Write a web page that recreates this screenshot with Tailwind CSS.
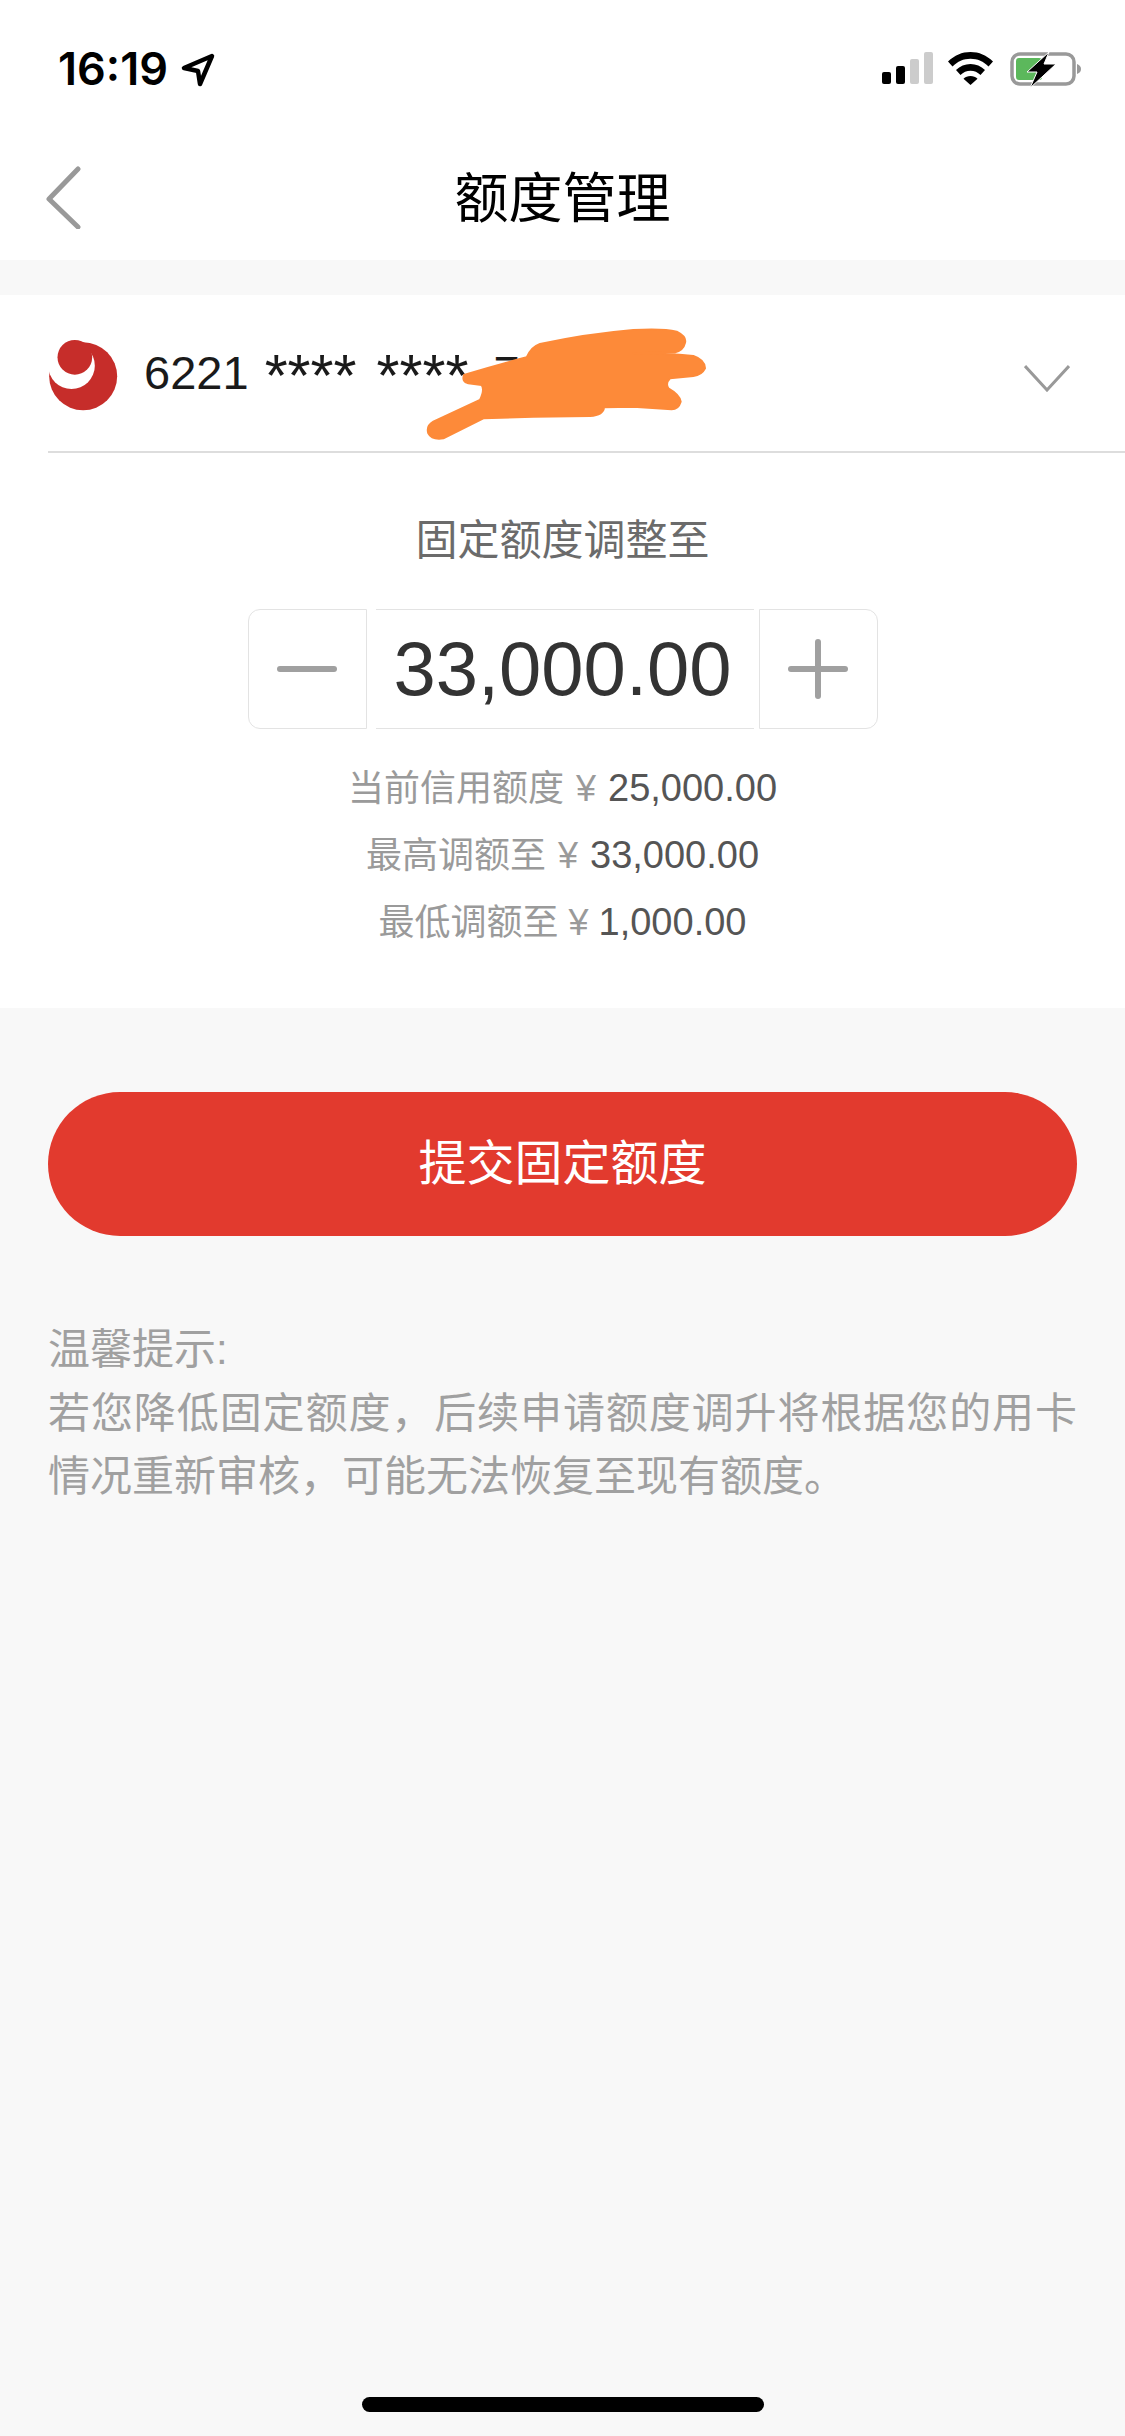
<!DOCTYPE html>
<html lang="zh">
<head>
    <meta charset="UTF-8">
    <meta name="viewport" content="width=device-width, initial-scale=1.0">
    <title>额度管理</title>
    <script src="https://cdn.jsdelivr.net/npm/@tailwindcss/browser@4"></script>
</head>
<body class="bg-[#f8f8f8] font-['Liberation_Sans','Noto_Sans_CJK_SC',sans-serif]">
    <div class="w-[1125px] h-[2436px] flex flex-col overflow-hidden relative">
        <!-- Status bar -->
        <div class="h-[127px] bg-white flex justify-between pt-[44px] pl-[58px] pr-[43px] shrink-0">
            <div class="flex items-start gap-[13px]">
                <span class="font-['Inter',sans-serif] text-[45px] leading-[50px] font-semibold text-black">16:19</span>
                <svg class="w-[34px] h-[34px] mt-[9px]" viewBox="0 0 34 34" fill="none" stroke="#000" stroke-width="4.500" stroke-linejoin="round">
                    <path d="M31 3L3 15l14 3 2 13z"/>
                </svg>
            </div>
            <div class="flex items-start gap-[15px] pt-[8px]">
                <div class="flex items-end gap-[5px] h-[32px]">
                    <div class="w-[9px] h-[12px] rounded-[2px] bg-black"></div>
                    <div class="w-[9px] h-[18px] rounded-[2px] bg-black"></div>
                    <div class="w-[9px] h-[25px] rounded-[2px] bg-[#ccc]"></div>
                    <div class="w-[9px] h-[32px] rounded-[2px] bg-[#ccc]"></div>
                </div>
                <svg class="w-[45px] h-[33px]" viewBox="0 0 45 33" fill="#000">
                    <path d="M22.500 0C14 0 6.500 3.300 0 9.500l4.500 5C9.500 9.500 15.500 6.800 22.500 6.800s13 2.700 18 7.700l4.500-5C38.500 3.300 31 0 22.500 0z"/>
                    <path d="M22.500 12c-5.500 0-10.500 2.200-14.500 6l4.500 5c2.800-2.700 6.200-4.200 10-4.200s7.200 1.500 10 4.200l4.500-5c-4-3.800-9-6-14.500-6z"/>
                    <path d="M22.500 24c-2.700 0-5.200 1-7 2.800l7 6.200 7-6.200c-1.800-1.800-4.300-2.800-7-2.800z"/>
                </svg>
                <svg class="w-[72px] h-[36px] ml-[2px]" viewBox="0 0 72 36" fill="none">
                    <rect x="2" y="2" width="62" height="30" rx="8" stroke="#999" stroke-width="3.500"/>
                    <path d="M67 12c3 1 4 3 4 5s-1 4-4 5z" fill="#999"/>
                    <rect x="6" y="6" width="26" height="22" rx="3" fill="#5cb85c"/>
                    <path d="M39 0L17 20h10L20 36l26-24H34z" fill="#000" stroke="#fff" stroke-width="1" stroke-linejoin="round"/>
                </svg>
            </div>
        </div>

        <!-- Nav -->
        <div class="h-[133px] bg-white relative flex items-center justify-center shrink-0 pt-[10px]">
            <svg class="absolute left-[44px] top-[38px] w-[38px] h-[64px]" viewBox="0 0 38 64" fill="none" stroke="#999" stroke-width="5" stroke-linecap="round" stroke-linejoin="round">
                <path d="M34 4L5 34l29 28"/>
            </svg>
            <h1 class="text-[54px] leading-[60px] text-black">额度管理</h1>
        </div>

        <div class="h-[35px] shrink-0"></div>

        <!-- Card + stepper -->
        <div class="bg-white h-[713px] shrink-0 flex flex-col items-center">
            <div class="w-full pl-[48px] h-[158px] shrink-0">
                <div class="h-[158px] border-b-[2px] border-[#dddddd] flex items-center relative">
                    <svg class="w-[71px] h-[75px] shrink-0 mt-[5px]" viewBox="55 50 212 225">
                        <circle cx="160" cy="165" r="102" fill="#c62d2a"/>
                        <circle cx="125" cy="133" r="70" fill="#fff"/>
                        <circle cx="135" cy="108" r="52" fill="#c62d2a"/>
                    </svg>
                    <span class="ml-[25px] text-[47px] leading-[56px] text-[#1a1a1a] whitespace-pre">6221 <span class="relative top-[7px] ml-[3px] text-[59px] leading-[40px]">****</span> <span class="relative top-[7px] ml-[7px] text-[59px] leading-[40px]">****</span> <span class="ml-[12px]">7</span></span>
                    <svg class="absolute right-[55px] top-[69px] w-[46px] h-[28px]" viewBox="0 0 46 28" fill="none" stroke="#999" stroke-width="3">
                        <path d="M1 2l22 24L45 2"/>
                    </svg>
                    <!-- marker scribble over the card number -->
                    <svg class="absolute left-[352px] top-[25px] w-[320px] h-[125px]" viewBox="0 0 960 375" fill="#fd8a39" stroke="#fd8a39" stroke-width="6" stroke-linejoin="round">
                        <path d="M192 165Q290 135 380 112Q395 80 420 72Q560 42 700 30Q790 25 830 35Q860 50 855 68Q850 90 825 97L700 100Q800 100 880 108Q915 120 915 145Q905 165 880 168L810 175Q795 190 805 205Q840 225 842 245Q835 268 815 268L700 260L612 262Q610 285 570 288L400 290L250 295L130 355Q95 360 85 340Q78 318 100 305L240 240Q255 210 245 195L205 190Q185 185 192 165z"/>
                    </svg>
                </div>
            </div>

            <p class="mt-[64px] text-[42px] leading-[48px] text-[#6b6b6b]">固定额度调整至</p>

            <!-- Stepper -->
            <div class="mt-[44px] flex items-stretch h-[120px]">
                <button class="w-[119px] border border-[#e3e3e3] rounded-l-[12px] flex items-center justify-center">
                    <span class="w-[60px] h-[6px] rounded-full bg-[#a0a0a0]"></span>
                </button>
                <div class="w-[378px] ml-[9px] border-y border-[#e3e3e3] flex items-center justify-center text-[76px] leading-[84px] text-[#333] pr-[4px]">33,000.00</div>
                <button class="w-[119px] ml-[5px] border border-[#e3e3e3] rounded-r-[12px] flex items-center justify-center relative">
                    <span class="w-[60px] h-[6px] rounded-full bg-[#a0a0a0]"></span>
                    <span class="absolute w-[6px] h-[60px] rounded-full bg-[#a0a0a0]"></span>
                </button>
            </div>

            <!-- Limits -->
            <div class="mt-[26px] flex flex-col items-center text-[36px] leading-[66px] text-[#9a9a9a]">
                <p>当前信用额度 <span class="mx-[2px]">¥</span> <span class="text-[38px] text-[#555]">25,000.00</span></p>
                <p>最高调额至 <span class="mx-[2px]">¥</span> <span class="text-[38px] text-[#555]">33,000.00</span></p>
                <p>最低调额至 ¥ <span class="text-[38px] text-[#555]">1,000.00</span></p>
            </div>
        </div>

        <!-- Submit -->
        <div class="mt-[84px] px-[48px]">
            <button class="w-full h-[144px] rounded-full bg-[#e23a2e] text-white text-[48px]">提交固定额度</button>
        </div>

        <!-- Tips -->
        <div class="mt-[82px] px-[48px] text-[42px] leading-[63.500px] text-[#a0a0a0]">
            <p>温馨提示:</p>
            <p class="text-justify">若您降低固定额度，后续申请额度调升将根据您的用卡情况重新审核，可能无法恢复至现有额度。</p>
        </div>

        <!-- Home indicator -->
        <div class="absolute left-[362px] bottom-[24px] w-[402px] h-[15px] rounded-full bg-black"></div>
    </div>
</body>
</html>
